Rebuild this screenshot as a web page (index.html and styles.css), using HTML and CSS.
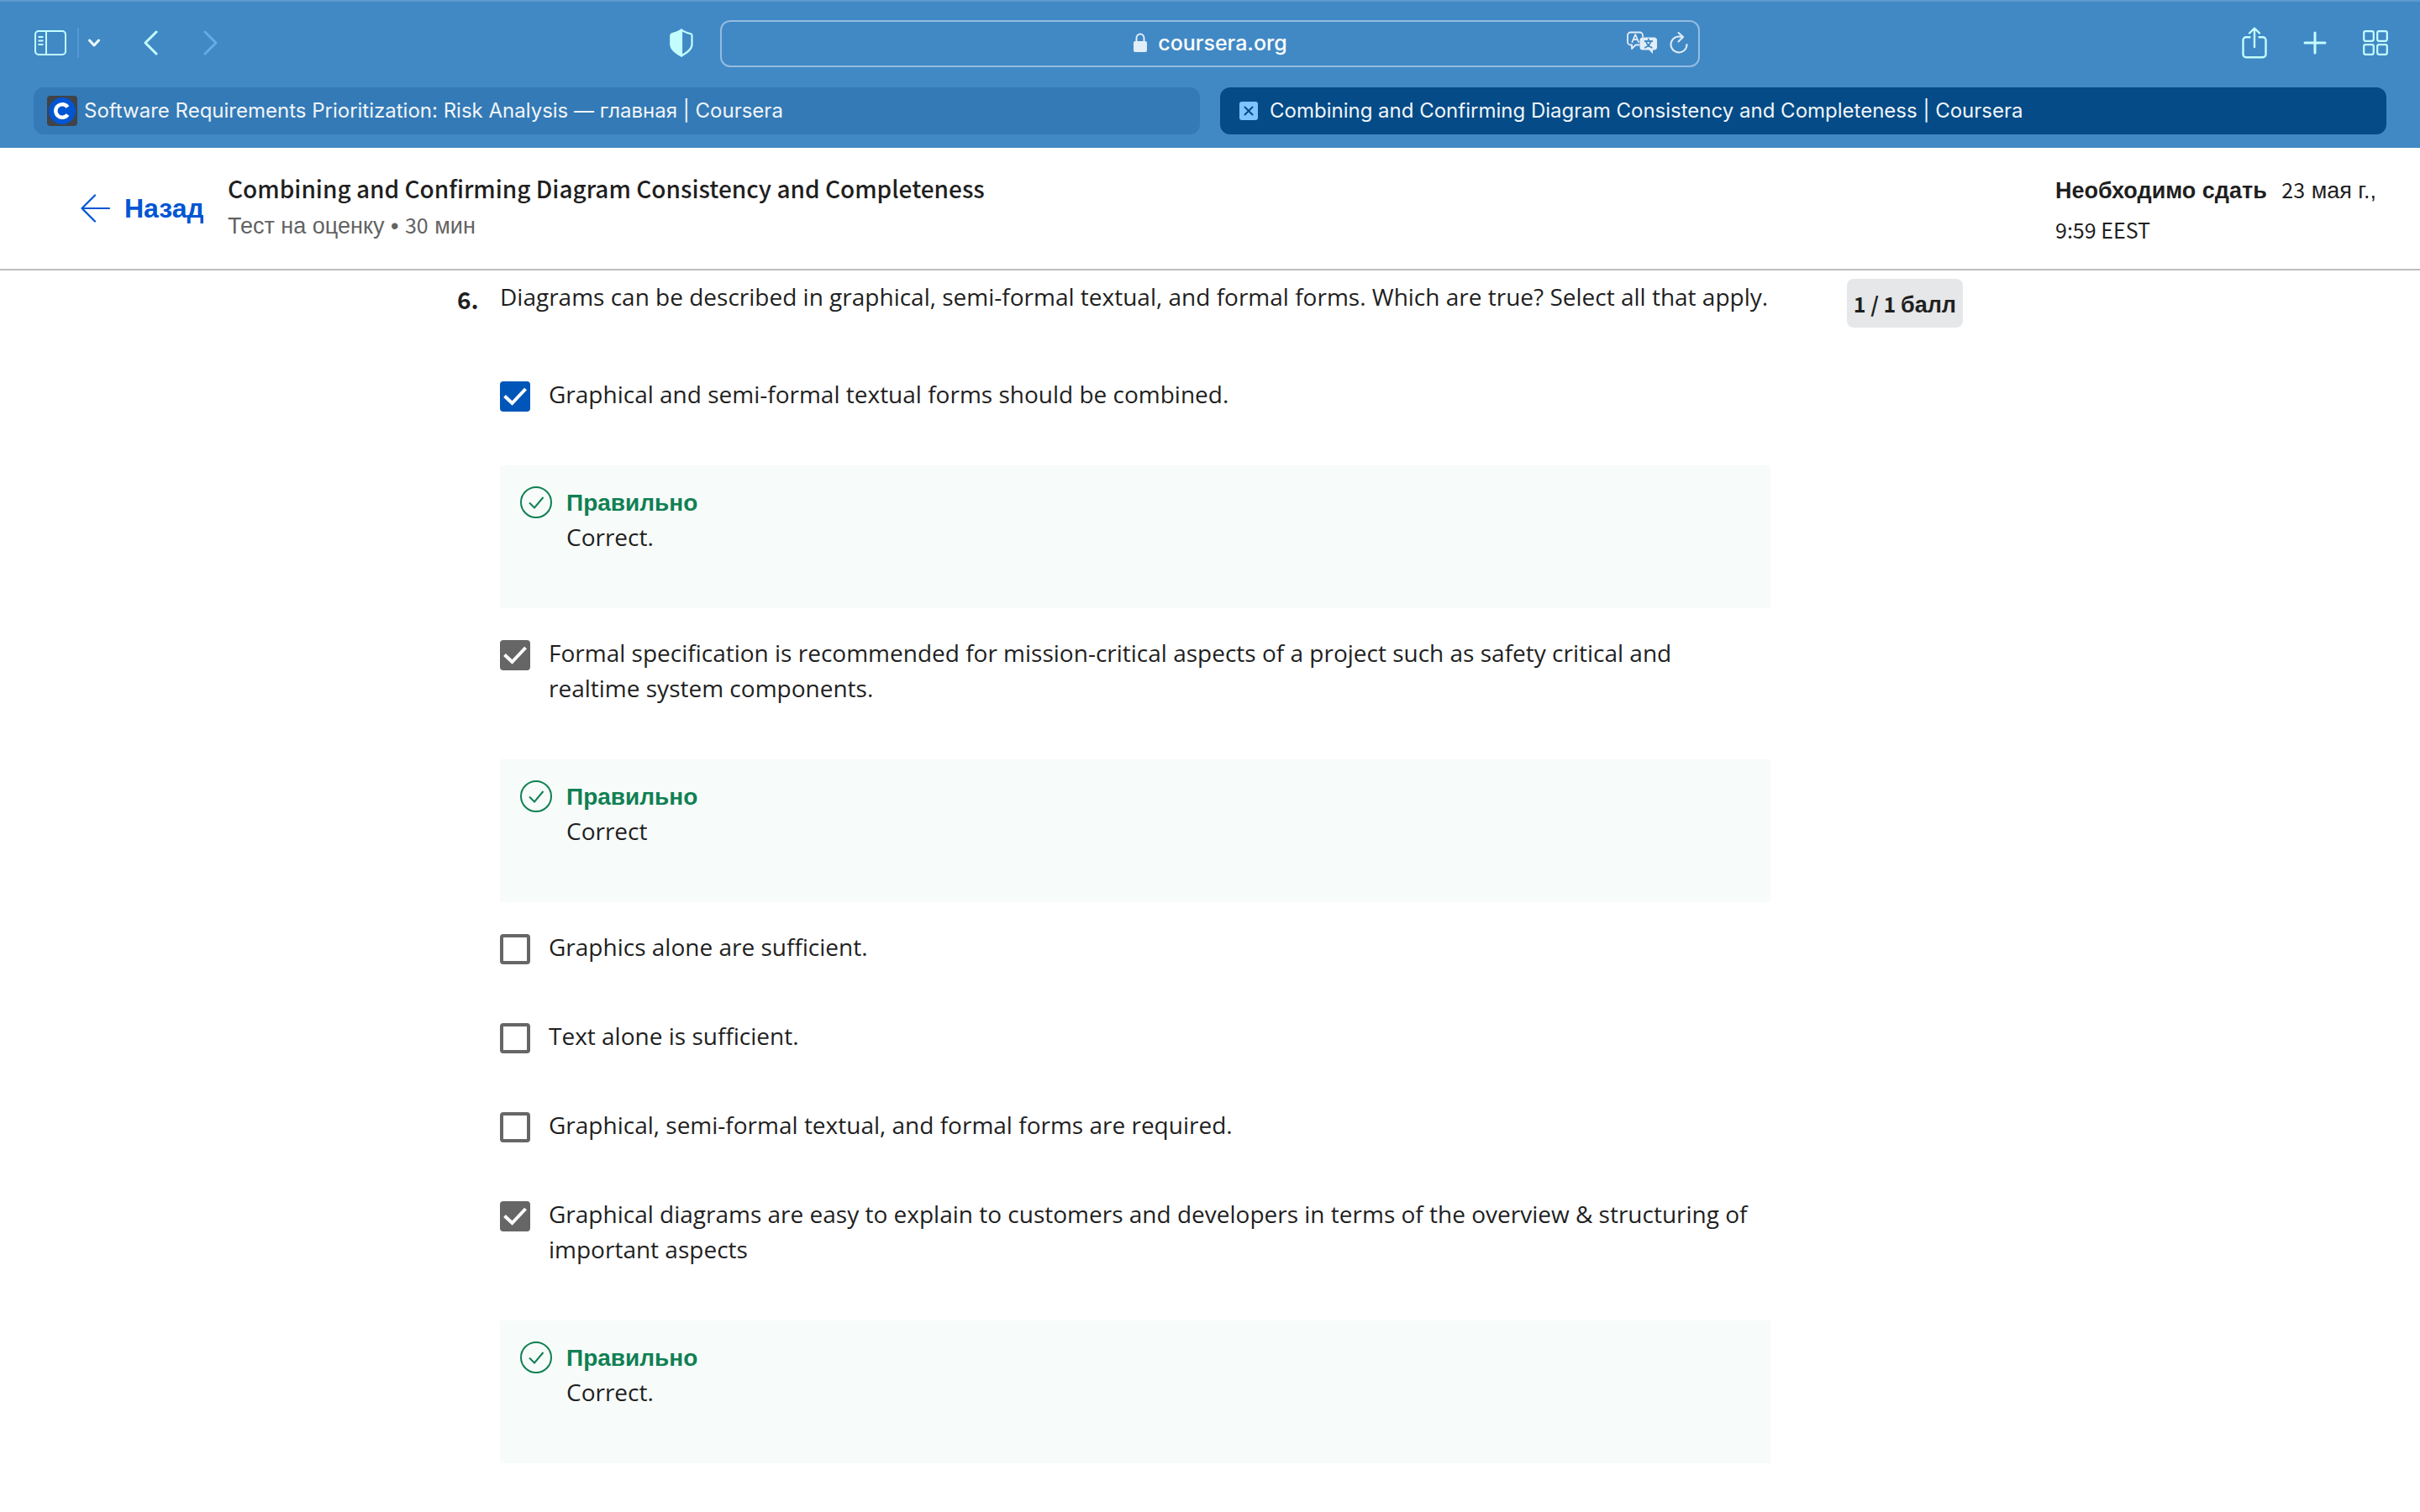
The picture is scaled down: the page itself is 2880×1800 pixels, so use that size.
FILE: index.html
```html
<!DOCTYPE html>
<html lang="ru">
<head>
<meta charset="utf-8">
<meta name="viewport" content="width=device-width, initial-scale=1">
<title>Combining and Confirming Diagram Consistency and Completeness | Coursera</title>
<link rel="stylesheet" href="styles.css">
</head>
<body>
<div class="browser">
  <div class="toolbar">
    <div class="tools tools-left">
      <button class="tool" type="button" aria-label="Sidebar">
        <svg width="40" height="32" viewBox="0 0 40 32" fill="none" stroke="currentColor" stroke-width="2"><rect x="2" y="2" width="36" height="28" rx="4"/><path d="M15 2v28M5.500 9h6M5.500 13.500h6M5.500 18h6"/></svg>
      </button>
      <span class="divider"></span>
      <button class="tool tool-menu" type="button" aria-label="Tab groups">
        <svg width="16" height="12" viewBox="0 0 16 12" fill="none" stroke="currentColor" stroke-width="3" stroke-linecap="round" stroke-linejoin="round"><path d="M2.500 3l5.500 6 5.500-6"/></svg>
      </button>
      <button class="tool tool-back" type="button" aria-label="Back">
        <svg width="18" height="32" viewBox="0 0 18 32" fill="none" stroke="currentColor" stroke-width="3" stroke-linecap="round" stroke-linejoin="round"><path d="M16 3L3 16l13 13"/></svg>
      </button>
      <button class="tool tool-forward" type="button" aria-label="Forward">
        <svg width="18" height="32" viewBox="0 0 18 32" fill="none" stroke="currentColor" stroke-width="3" stroke-linecap="round" stroke-linejoin="round"><path d="M2 3l13 13L2 29"/></svg>
      </button>
      <button class="tool tool-shield" type="button" aria-label="Privacy report">
        <svg width="28" height="34" viewBox="0 0 28 34" fill="none" stroke="currentColor" stroke-width="2.200" stroke-linejoin="round"><path d="M14 1.500C11 4 6 5.500 3 6.200c-1.200.3-1.500 1-1.500 2V19c0 6 6.500 10 12.500 13.500C20 29 26.500 25 26.500 19V8.200c0-1-.3-1.700-1.500-2C22 5.500 17 4 14 1.500z"/><path d="M14 1.500C11 4 6 5.500 3 6.200c-1.200.3-1.500 1-1.500 2V19c0 6 6.500 10 12.500 13.500z" fill="currentColor"/></svg>
      </button>
    </div>
    <div class="address">
      <svg class="lock" width="18" height="24" viewBox="0 0 18 24"><rect x="1" y="10" width="16" height="13" rx="2" fill="currentColor"/><path d="M4.500 10.500V6.500a4.500 5 0 0 1 9 0v4" fill="none" stroke="currentColor" stroke-width="2"/></svg>
      <span class="host">coursera.org</span>
      <div class="address-tools">
        <button class="tool" type="button" aria-label="Translate">
          <svg width="38" height="30" viewBox="0 0 38 30" fill="none" stroke="currentColor" stroke-width="1.800" stroke-linecap="round" stroke-linejoin="round"><path d="M15.500 17.500h-4L7 22v-4.500H5.500A3.500 3.500 0 0 1 2 14V6a3.500 3.500 0 0 1 3.500-3.500h11A3.500 3.500 0 0 1 20 6v1.500"/><path d="M7.500 14L11.200 5 15 14M8.800 11.200h4.800"/><path d="M20 8.500h13.500A3.500 3.500 0 0 1 37 12v8a3.500 3.500 0 0 1-3.500 3.500H32V28l-4.500-4.500H20a3.500 3.500 0 0 1-3.500-3.500v-8A3.500 3.500 0 0 1 20 8.500z" fill="currentColor" stroke="none"/><path d="M26.800 10.500v2M22.500 13h8.800M24 13.500c1 3.300 3.500 5.700 6.800 7.200M29.500 13.500c-1 3.300-3.300 5.700-6.700 7.200" stroke="#4189c5"/></svg>
        </button>
        <button class="tool" type="button" aria-label="Reload">
          <svg width="22" height="28" viewBox="0 0 22 28" fill="none" stroke="currentColor" stroke-width="2" stroke-linecap="round" stroke-linejoin="round"><path d="M20.500 16A9.500 9.500 0 1 1 15.500 7.600"/><path d="M10.500 2l5.500 5-5.500 5.500"/></svg>
        </button>
      </div>
    </div>
    <div class="tools tools-right">
      <button class="tool" type="button" aria-label="Share">
        <svg width="30" height="38" viewBox="0 0 30 38" fill="none" stroke="currentColor" stroke-width="2.400" stroke-linecap="round" stroke-linejoin="round"><path d="M9.500 12.200H5A3.500 3.500 0 0 0 1.500 15.700v17A3.500 3.500 0 0 0 5 36.200h20a3.500 3.500 0 0 0 3.500-3.500v-17a3.500 3.500 0 0 0-3.500-3.500h-4.500M15 24V2M9 7.500L15 1.700l6 5.800"/></svg>
      </button>
      <button class="tool" type="button" aria-label="New tab">
        <svg width="28" height="28" viewBox="0 0 28 28" fill="none" stroke="currentColor" stroke-width="3" stroke-linecap="round"><path d="M14 2v24M2 14h24"/></svg>
      </button>
      <button class="tool" type="button" aria-label="Tab overview">
        <svg width="30" height="30" viewBox="0 0 30 30" fill="none" stroke="currentColor" stroke-width="2.200"><rect x="1.200" y="1.200" width="11.600" height="11.600" rx="2"/><rect x="17.200" y="1.200" width="11.600" height="11.600" rx="2"/><rect x="1.200" y="17.200" width="11.600" height="11.600" rx="2"/><rect x="17.200" y="17.200" width="11.600" height="11.600" rx="2"/></svg>
      </button>
    </div>
  </div>
  <nav class="tabs">
    <a class="tab" href="#">
      <svg width="36" height="36" viewBox="0 0 36 36"><rect width="36" height="36" rx="4" fill="#404348"/><circle cx="18" cy="18" r="16" fill="#0056d2"/><path d="M24.500 13.500a7.800 7.800 0 1 0 0 9" fill="none" stroke="#fff" stroke-width="4.500"/></svg>
      <span>Software Requirements Prioritization: Risk Analysis — главная | Coursera</span>
    </a>
    <a class="tab tab-active" href="#" aria-current="page">
      <svg width="22" height="22" viewBox="0 0 22 22"><rect width="22" height="22" rx="3" fill="#7fc4ff"/><path d="M6.500 6.500l9 9M15.500 6.500l-9 9" stroke="#044b87" stroke-width="2" stroke-linecap="round"/></svg>
      <span>Combining and Confirming Diagram Consistency and Completeness | Coursera</span>
    </a>
  </nav>
</div>

<header class="header">
  <a class="back" href="#">
    <svg width="36" height="36" viewBox="0 0 36 36" fill="none" stroke="currentColor" stroke-width="2.200" stroke-linejoin="round" stroke-linecap="round"><path d="M34 18H2M17 2.500L1.500 18 17 33.500"/></svg>
    <span class="back-text">Назад</span>
  </a>
  <div class="heading">
    <h1 class="title">Combining and Confirming Diagram Consistency and Completeness</h1>
    <p class="subtitle">Тест на оценку • <span class="latin">30</span> мин</p>
  </div>
  <p class="due"><strong class="due-label">Необходимо сдать</strong> <span class="latin">23</span> мая г., <span class="latin nowrap">9:59 EEST</span></p>
</header>

<main class="question">
  <span class="number">6.</span>
  <section class="body">
    <p class="prompt">Diagrams can be described in graphical, semi-formal textual, and formal forms. Which are true? Select all that apply.</p>

    <label class="option">
      <span class="check"><input class="box box-active" type="checkbox" checked><svg class="mark" viewBox="0 0 36 36"><path d="M5.500 17.500l9 8.500L30.500 9"/></svg></span>
      <span class="answer">Graphical and semi-formal textual forms should be combined.</span>
    </label>
    <div class="feedback">
      <svg class="ok" viewBox="0 0 38 38"><circle cx="19" cy="19" r="18"/><path d="M11 19.500l6 6L27.500 13"/></svg>
      <div><p class="verdict">Правильно</p><p>Correct.</p></div>
    </div>

    <label class="option">
      <span class="check"><input class="box" type="checkbox" checked><svg class="mark" viewBox="0 0 36 36"><path d="M5.500 17.500l9 8.500L30.500 9"/></svg></span>
      <span class="answer">Formal specification is recommended for mission-critical aspects of a project such as safety critical and realtime system components.</span>
    </label>
    <div class="feedback">
      <svg class="ok" viewBox="0 0 38 38"><circle cx="19" cy="19" r="18"/><path d="M11 19.500l6 6L27.500 13"/></svg>
      <div><p class="verdict">Правильно</p><p>Correct</p></div>
    </div>

    <label class="option">
      <span class="check"><input class="box" type="checkbox"></span>
      <span class="answer">Graphics alone are sufficient.</span>
    </label>
    <label class="option">
      <span class="check"><input class="box" type="checkbox"></span>
      <span class="answer">Text alone is sufficient.</span>
    </label>
    <label class="option">
      <span class="check"><input class="box" type="checkbox"></span>
      <span class="answer">Graphical, semi-formal textual, and formal forms are required.</span>
    </label>
    <label class="option">
      <span class="check"><input class="box" type="checkbox" checked><svg class="mark" viewBox="0 0 36 36"><path d="M5.500 17.500l9 8.500L30.500 9"/></svg></span>
      <span class="answer">Graphical diagrams are easy to explain to customers and developers in terms of the overview &amp; structuring of important aspects</span>
    </label>
    <div class="feedback">
      <svg class="ok" viewBox="0 0 38 38"><circle cx="19" cy="19" r="18"/><path d="M11 19.500l6 6L27.500 13"/></svg>
      <div><p class="verdict">Правильно</p><p>Correct.</p></div>
    </div>
  </section>
  <span class="points">1 / 1 <span class="cyrillic">балл</span></span>
</main>
</body>
</html>
```
FILE: styles.css
```css
* {
  box-sizing: border-box;
}

body {
  margin: 0;
  background: #fff;
  color: #1f1f1f;
  font: 28px/42px "Open Sans", sans-serif;
}

p,
h1 {
  margin: 0;
}

svg {
  display: block;
  flex: none;
}

a {
  color: inherit;
  text-decoration: none;
}

/* Browser chrome */
.browser {
  background: #4189c5;
  border-top: 2px solid #5c9acf;
  padding-bottom: 16px;
}

.toolbar {
  display: grid;
  grid-template-columns: 1fr minmax(0, 1166px) 1fr;
  align-items: center;
  padding: 22px 0 24px;
}

.tools {
  display: flex;
  align-items: center;
  padding-bottom: 2px;
  color: #c3fdff;
}

.tools-left {
  padding-left: 40px;
  padding-right: 32px;
}

.tools-right {
  justify-content: flex-end;
  gap: 43px;
  padding-right: 38px;
}

.tool {
  border: 0;
  padding: 0;
  background: none;
  color: inherit;
}

.divider {
  width: 2px;
  height: 36px;
  margin: 0 10px 0 12px;
  background: #5499d6;
}

.tool-menu {
  color: #f0fdff;
}

.tool-back {
  margin-left: 50px;
}

.tool-forward {
  margin-left: 54px;
  color: #64abe8;
}

.tool-shield {
  margin-left: auto;
}

.address {
  display: grid;
  grid-template-columns: 1fr auto auto 1fr;
  align-items: center;
  gap: 12px;
  height: 56px;
  padding: 0 12px 2px;
  border: 2px solid #93bce0;
  border-radius: 12px;
  color: #e1edf7;
}

.lock {
  justify-self: end;
  grid-column: 2;
}

.host {
  color: #fff;
  font: 500 25px/32px Inter, sans-serif;
}

.address-tools {
  display: flex;
  align-items: center;
  justify-content: flex-end;
  gap: 14px;
}

.tabs {
  display: grid;
  grid-template-columns: 1fr 1fr;
  gap: 24px;
  padding: 0 40px;
}

.tab {
  display: flex;
  align-items: center;
  gap: 8px;
  height: 56px;
  padding: 0 16px;
  border-radius: 12px;
  background: #347ab6;
  color: #f0f5fa;
  font: 400 24px/32px Inter, sans-serif;
  white-space: nowrap;
}

.tab-active {
  gap: 14px;
  padding-left: 23px;
  background: #044b87;
}

/* Page header */
.header {
  display: flex;
  align-items: center;
  min-height: 146px;
  padding: 0 34px 0 96px;
  border-bottom: 2px solid #bdbdbd;
}

.back {
  display: flex;
  align-items: center;
  gap: 16px;
  color: #0056d2;
}

.back-text {
  width: 94px;
  overflow: hidden;
  font: 700 32px/42px "Liberation Sans", sans-serif;
}

.heading {
  flex: 1;
  margin-left: 29px;
}

.title {
  font: 500 28px/42px "Noto Sans CJK SC", sans-serif;
}

.subtitle {
  color: #636363;
  font: 27px/48px "Liberation Sans", sans-serif;
}

.due {
  width: 400px;
  padding-top: 6px;
  font: 27px/48px "Liberation Sans", sans-serif;
}

.due-label {
  margin-right: 10px;
}

.latin {
  font: 25px/24px "Noto Sans CJK SC", sans-serif;
}

.nowrap {
  white-space: nowrap;
}

/* Question */
.question {
  display: flex;
  align-items: flex-start;
  max-width: 1792px;
  margin: 0 auto;
  padding: 10px 0 58px;
}

.number {
  width: 51px;
  font: 700 28px/48px "Noto Sans CJK SC", sans-serif;
}

.body {
  flex: 0 1 1512px;
}

.prompt {
  margin-bottom: 74px;
}

.option {
  display: flex;
  align-items: flex-start;
  gap: 22px;
  padding: 0 20px 64px 0;
}

.check {
  display: grid;
  flex: none;
  width: 36px;
  margin-top: 6px;
}

.box,
.mark {
  grid-area: 1 / 1;
  width: 36px;
  height: 36px;
  margin: 0;
}

.box {
  appearance: none;
  border: 4px solid #666;
  border-radius: 4px;
}

.box:checked {
  background: #666;
}

.box-active:checked {
  border-color: #0056b8;
  background: #0056b8;
}

.mark {
  fill: none;
  stroke: #fff;
  stroke-width: 4;
  pointer-events: none;
}

.feedback {
  display: flex;
  gap: 17px;
  min-height: 170px;
  margin-bottom: 32px;
  padding: 25px 24px;
  background: #f7fbf9;
  line-height: 40px;
}

.feedback:last-child {
  margin-bottom: 0;
}

.ok {
  width: 38px;
  height: 38px;
  fill: none;
  stroke: #0f8053;
  stroke-width: 2;
}

.verdict {
  color: #0f8053;
  font: 700 28px/40px "Liberation Sans", sans-serif;
}

.points {
  margin-left: auto;
  padding: 8px;
  border-radius: 8px;
  background: #e5e7e8;
  font: 700 25px/42px "Noto Sans CJK SC", sans-serif;
  white-space: nowrap;
}

.cyrillic {
  font: 700 27px/24px "Liberation Sans", sans-serif;
}
```
